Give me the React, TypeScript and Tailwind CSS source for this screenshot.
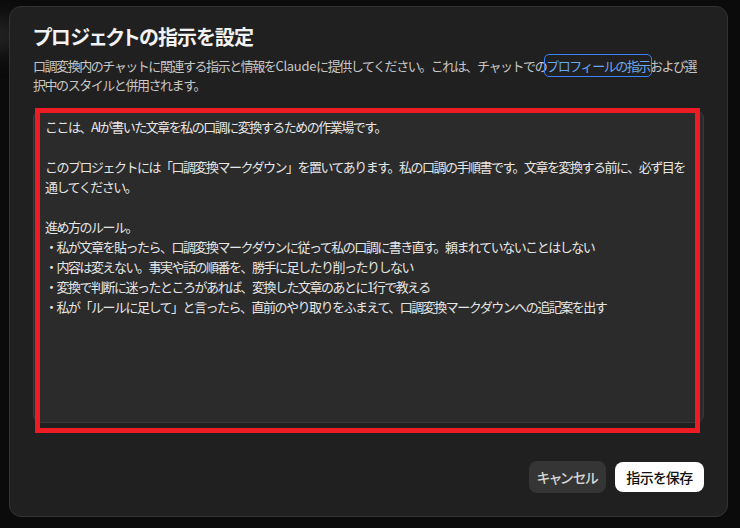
const font = {
  fontFamily: '"Noto Sans CJK JP", "Noto Sans", sans-serif',
};

const lines = [
  "ここは、AIが書いた文章を私の口調に変換するための作業場です。",
  "",
  "このプロジェクトには「口調変換マークダウン」を置いてあります。私の口調の手順書です。文章を変換する前に、必ず目を",
  "通してください。",
  "",
  "進め方のルール。",
  "・私が文章を貼ったら、口調変換マークダウンに従って私の口調に書き直す。頼まれていないことはしない",
  "・内容は変えない。事実や話の順番を、勝手に足したり削ったりしない",
  "・変換で判断に迷ったところがあれば、変換した文章のあとに1行で教える",
  "・私が「ルールに足して」と言ったら、直前のやり取りをふまえて、口調変換マークダウンへの追記案を出す",
];

export default function App() {
  return (
    <div
      className="relative w-[740px] h-[528px] overflow-hidden bg-[#0b0b0b] pt-[6px] pl-[9px]"
      style={font}
    >
      {/* blurred backdrop behind the modal */}
      <div className="absolute left-[-20px] top-[20px] w-[40px] h-[30px] rounded-full bg-[#2a2a2a] blur-md" />

      <div className="relative flex flex-col w-[719px] h-[511px] rounded-[12px] border border-[#333333] bg-[#202020] px-[23px] pt-[16px]">
        <h2
          className="text-[20px] leading-[28px] font-bold tracking-[-0.8px] text-[#f2f2f2]"
          style={{ fontFeatureSettings: '"palt"' }}
        >
          プロジェクトの指示を設定
        </h2>
        <p className="mt-[5px] whitespace-nowrap text-[13px] leading-[19px] tracking-[-1.45px] text-[#c6c6c6]">
          口調変換内のチャットに関連する指示と情報を
          <span className="tracking-[-0.3px]">Claude</span>
          に提供してください。これは、チャットでの
          <span className="rounded-[3px] outline outline-1 outline-offset-[1px] outline-[#3b82f6] text-[#6aa8f0]">
            プロフィールの指示
          </span>
          および選
          <br />
          択中のスタイルと併用されます。
        </p>

        <div className="relative mt-[16px] h-[313px] rounded-[8px] border border-[#3a3a3a] bg-[#2b2b2b] pl-[11px] pt-[6px]">
          <div className="whitespace-pre text-[13px] leading-[20px] tracking-[-1.5px] text-[#e6e6e6]">
            {lines.join("\n")}
          </div>
          {/* annotation frame */}
          <div className="absolute left-[1px] top-[-3px] w-[665px] h-[325px] border-[5px] border-[#ed1c24]" />
        </div>

        <div
          className="mt-[38px] flex items-center justify-end gap-[9px]"
          style={{ fontFeatureSettings: '"palt"' }}
        >
          <button className="h-[32px] w-[77px] rounded-[8px] bg-[#353535] text-[14px] font-medium tracking-[-0.5px] text-[#d6d6d6]">
            キャンセル
          </button>
          <button className="h-[30px] w-[89px] rounded-[8px] bg-white text-[14px] font-medium tracking-[-0.5px] text-[#111111]">
            指示を保存
          </button>
        </div>
      </div>
    </div>
  );
}
